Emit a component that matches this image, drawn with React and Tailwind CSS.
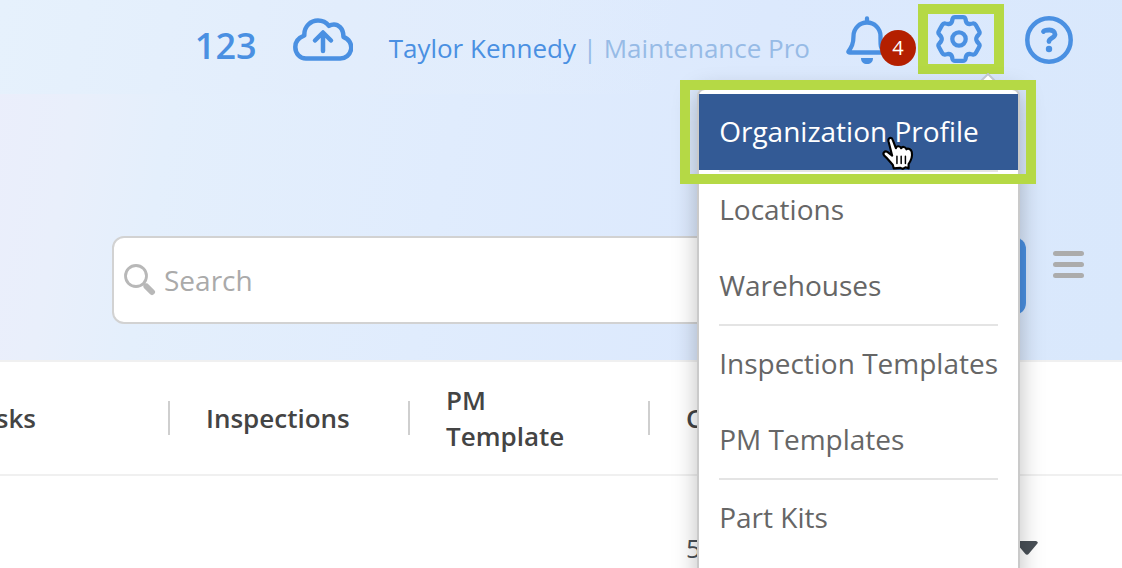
import React from "react";

const groups = [
  ["Organization Profile"],
  ["Locations", "Warehouses"],
  ["Inspection Templates", "PM Templates"],
  ["Part Kits"],
];

const tabs = ["Tasks", "Inspections", "PM Template", "Cases"];

function CloudIcon() {
  return (
    <svg viewBox="0 0 60 44" className="h-[44px] w-[60px]" fill="none" stroke="currentColor" strokeWidth="4.500" strokeLinecap="round" strokeLinejoin="round">
      <path d="M13 40.500H47A11 11 0 0 0 50.500 19C50.500 9.500 44.500 6.500 41 6.500C39 6.500 37.500 6.900 36 7.800C33 4 29 2.500 25 2.500C17.500 2.500 11.300 8.500 11.300 16.500V17.500C6 19.500 2.300 23.500 2.300 29C2.300 35.500 7 40.500 13 40.500Z" />
      <path d="M30 33V15M22 22.500L30 14.500L38 22.500" />
    </svg>
  );
}

function BellIcon() {
  return (
    <svg viewBox="0 0 42 48" className="h-[48px] w-[42px]">
      <path d="M21 2.500V6M4 36.500H38C34 32 34.500 28 34.500 20A13.500 13.500 0 0 0 7.500 20C7.500 28 5.500 31 2.500 35.500Q2 36.500 4 36.500Z" fill="none" stroke="currentColor" strokeWidth="4.300" strokeLinecap="round" strokeLinejoin="round" />
      <path d="M15 42H27C27 46 24.500 48 21 48S15 46 15 42Z" fill="currentColor" />
    </svg>
  );
}

function GearIcon() {
  return (
    <svg viewBox="0 0 46 48" className="h-[48px] w-[46px]" fill="none" stroke="currentColor" strokeWidth="4.300" strokeLinejoin="round">
      <path d="M19 2.200H27Q29 2.200 29.500 4L30 6.500Q31 9.300 34 9L36.500 8.500Q38.700 8 39.800 10L43 15.800Q44.300 18 42.700 19.500L41 21.500Q39.500 24 41 26.500L42.700 28.500Q44.300 30 43 32.200L39.800 38Q38.700 40 36.500 39.500L34 39Q31 38.700 30 41.500L29.500 44Q29 45.800 27 45.800H19Q17 45.800 16.500 44L16 41.500Q15 38.700 12 39L9.500 39.500Q7.300 40 6.200 38L3 32.200Q1.700 30 3.300 28.500L5 26.500Q6.500 24 5 21.500L3.300 19.500Q1.700 18 3 15.800L6.200 10Q7.300 8 9.500 8.500L12 9Q15 9.300 16 6.500L16.500 4Q17 2.200 19 2.200Z" />
      <circle cx="23" cy="24" r="6.700" />
    </svg>
  );
}

function HelpIcon() {
  return (
    <svg viewBox="0 0 48 48" className="h-[48px] w-[48px]" fill="none" stroke="currentColor" strokeWidth="4.500" strokeLinecap="round" strokeLinejoin="round">
      <circle cx="24" cy="24" r="21.700" />
      <path d="M18.500 15.500C19.500 14 22 14 24.500 14C27.500 14 30 15.500 30 18.300C30 22 24 22 24 25.500" strokeWidth="4.800" />
      <circle cx="24" cy="33" r="3.200" fill="currentColor" stroke="none" />
    </svg>
  );
}

function SearchIcon() {
  return (
    <svg viewBox="0 0 32 32" className="h-[32px] w-[32px] shrink-0" fill="none" stroke="#b8b8b8">
      <circle cx="12" cy="12" r="10.500" strokeWidth="2.800" />
      <path d="M19.500 19.500L22 22" strokeWidth="3" />
      <path d="M22.500 22.500L28 28" strokeWidth="6" strokeLinecap="round" />
    </svg>
  );
}

function HandPointer() {
  return (
    <svg viewBox="0 0 32 34" className="pointer-events-none absolute left-[182px] top-[45px] h-[36px] w-[34px]" strokeLinejoin="round" strokeLinecap="round">
      <path d="M12 31.500L11 28C8 25 6 22 3 19.500C1 17 3.500 14.500 6 16L10.500 19.500L7 6C6.200 2.500 10 1.500 11 4.500L14 12.500C14.500 10 18 10 19 12.500C20 10.500 23 11 24 13.500C25.500 12 28.500 13.500 29 16C30 20.500 28 24.500 26 27.500V31.500L23 30.500L20.500 32L18 31Z" fill="white" stroke="black" strokeWidth="2" />
      <path d="M15 20V27M19 20V27M23 20V27" stroke="black" strokeWidth="1.400" />
    </svg>
  );
}

function SettingsMenu() {
  return (
    <nav aria-label="Settings" className="absolute -right-[16px] top-[84px] z-10 rounded-t-lg border-2 border-[#cacaca] bg-white pb-8 pt-1 shadow-[0_4px_24px_rgba(0,0,0,0.25)]">
      <svg viewBox="0 0 32 16" className="absolute -top-[17px] right-[14px] h-[16px] w-[32px]" fill="white" stroke="#c0c6d0" strokeWidth="2">
        <path d="M0 17L16 1L32 17" />
      </svg>
      {groups.map((items, g) => (
        <React.Fragment key={items[0]}>
          {g > 0 && <hr className="mx-5 border-t-2 border-[#e4e4e4]" />}
          {items.map((item) => (
            <a
              key={item}
              href="#"
              className={
                item === "Organization Profile"
                  ? "block whitespace-nowrap bg-[#335a95] px-5 pb-0.5 text-[28px] leading-[74px] text-white"
                  : "block whitespace-nowrap px-5 pb-0.5 text-[28px] leading-[74px] text-[#666666]"
              }
            >
              {item}
            </a>
          ))}
        </React.Fragment>
      ))}
      <div className="pointer-events-none absolute -left-[19px] -right-[18px] -top-[10px] h-[104px] border-10 border-[#b5d945]" />
      <HandPointer />
    </nav>
  );
}

export default function App() {
  return (
    <div className="relative min-h-screen overflow-hidden bg-white font-['Open_Sans','Noto_Sans',sans-serif]">
      <header className="border-b-2 border-[#f0f0f0] bg-linear-[100deg,#ebeefb_0%,#e9effb_8%,#e4effc_16%,#e0ecfd_40%,#dce9fd_65%,#d9e8fc_100%] pb-9">
        <div className="flex h-[94px] items-start justify-end bg-linear-[100deg,#e6f1fc_0%,#e2edfc_30%,transparent_60%] pr-[49px] pt-1 text-[#4a90e2]">
          <span className="mr-9 mt-3 text-[36px] font-semibold leading-[60px]">123</span>
          <button type="button" aria-label="Upload" className="mr-9 mt-[14px]"><CloudIcon /></button>
          <p className="mt-[26px] whitespace-nowrap text-[26px] leading-[36px]">
            Taylor Kennedy <span className="text-[#97bbe6]">| Maintenance Pro</span>
          </p>
          <button type="button" aria-label="Notifications" className="relative ml-9 mr-[30px] mt-3">
            <BellIcon />
            <span className="absolute -right-[28px] top-[14px] flex size-9 items-center justify-center rounded-full bg-[#b41f00] text-[20px] text-white">4</span>
          </button>
          <div className="relative">
            <button type="button" aria-label="Settings" className="flex h-[70px] w-[86px] items-center border-10 border-[#b5d945] pl-2"><GearIcon /></button>
            <SettingsMenu />
          </div>
          <button type="button" aria-label="Help" className="ml-[21px] mt-3"><HelpIcon /></button>
        </div>
        <div className="mt-[142px] flex items-start pl-28 pr-[38px]">
          <label className="flex h-[88px] flex-1 items-center gap-2 rounded-l-xl border-2 border-[#d2d2d2] bg-white pl-[10px]">
            <SearchIcon />
            <input type="search" aria-label="Search" placeholder="Search" className="min-w-0 flex-1 text-[28px] text-[#666666] outline-none placeholder:text-[#aaaaaa]" />
          </label>
          <button type="button" aria-label="Run search" className="mt-px h-[78px] w-40 rounded-r-xl bg-[#4a90e2]" />
          <button type="button" aria-label="Menu" className="ml-[27px] mt-[15px] flex flex-col gap-[6px]">
            <span className="h-[5px] w-[31px] rounded-full bg-[#acacac]" />
            <span className="h-[5px] w-[31px] rounded-full bg-[#acacac]" />
            <span className="h-[5px] w-[31px] rounded-full bg-[#acacac]" />
          </button>
        </div>
      </header>
      <nav aria-label="Sections" className="flex overflow-hidden border-b-2 border-[#f0f0f0]">
        <div className="-ml-[72px] flex h-28 items-center">
          {tabs.map((tab) => (
            <div key={tab} className="relative flex w-60 shrink-0 items-center px-[38px]">
              <a href="#" className="text-[26px] font-semibold leading-[36px] text-[#444444]">{tab}</a>
              <span className="absolute right-[-2px] h-[34px] w-[2px] bg-[#cfcfcf]" />
            </div>
          ))}
        </div>
      </nav>
      <main className="flex justify-end pr-[84px] pt-[54px]">
        <label className="relative flex items-center text-[#495057]">
          <select aria-label="Rows" className="w-[352px] appearance-none bg-transparent text-[26px] font-medium leading-[36px] outline-none">
            <option>50</option>
          </select>
          <svg viewBox="0 0 22 14" className="pointer-events-none absolute right-0 h-[14px] w-[22px]" fill="currentColor">
            <path d="M2 0H20Q23 1 21 3L13 12.500Q11 15 9 12.500L1 3Q-1 1 2 0Z" />
          </svg>
        </label>
      </main>
    </div>
  );
}
